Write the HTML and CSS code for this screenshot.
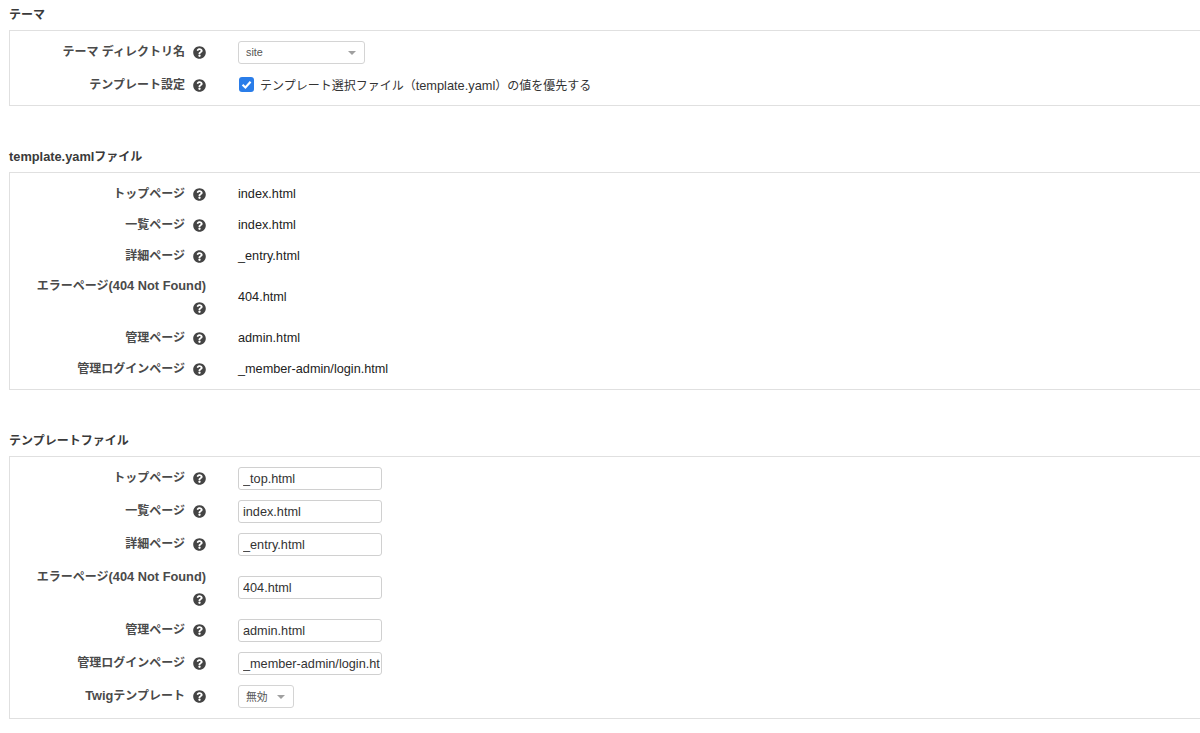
FILE: index.html
```html
<!DOCTYPE html>
<html lang="ja">
<head>
<meta charset="utf-8">
<title>テーマ設定</title>
<link rel="stylesheet" href="styles.css">
</head>
<body>
<svg class="defs" width="0" height="0" aria-hidden="true">
  <symbol id="q" viewBox="0 0 512 512">
    <path d="M504 256c0 137-111 248-248 248S8 393 8 256 119 8 256 8s248 111 248 248zM262.700 90c-54.500 0-89.300 23-116.500 63.800-3.500 5.300-2.400 12.400 2.700 16.300l34.700 26.300c5.200 3.900 12.600 3 16.700-2.100 17.900-22.700 30.100-35.800 57.300-35.800 20.400 0 45.700 13.100 45.700 33 0 15-12.400 22.700-32.600 34-23.600 13.200-54.800 29.700-54.800 70.900V300c0 6.600 5.400 12 12 12h56c6.600 0 12-5.400 12-12v-1.300c0-28.600 83.500-29.800 83.500-107.100C379.400 133.400 319 90 262.700 90zM256 339c-25.500 0-46.200 20.700-46.200 46.200 0 25.500 20.700 46.200 46.200 46.200s46.200-20.700 46.200-46.200c0-25.500-20.700-46.200-46.200-46.200z"/>
  </symbol>
</svg>

<section class="section s-theme">
  <h2 class="heading">テーマ</h2>
  <div class="box box-theme">
    <div class="row r-select">
      <div class="label">テーマ ディレクトリ名<svg class="help"><use href="#q"/></svg></div>
      <div class="value"><span class="select select-wide"><select><option>site</option></select></span></div>
    </div>
    <div class="row r-check">
      <div class="label">テンプレート設定<svg class="help"><use href="#q"/></svg></div>
      <div class="value check-value">
        <span class="check"><svg viewBox="0 0 14 14"><path d="M3.300 7.300 6 9.800 10.800 4.500"/></svg></span>
        <span>テンプレート選択ファイル（<span class="en">template.yaml</span>）の値を優先する</span>
      </div>
    </div>
  </div>
</section>

<section class="section s-yaml">
  <h2 class="heading"><span class="en">template.yaml</span>ファイル</h2>
  <div class="box box-yaml">
    <div class="row r-text"><div class="label">トップページ<svg class="help"><use href="#q"/></svg></div><div class="value">index.html</div></div>
    <div class="row r-text"><div class="label">一覧ページ<svg class="help"><use href="#q"/></svg></div><div class="value">index.html</div></div>
    <div class="row r-text"><div class="label">詳細ページ<svg class="help"><use href="#q"/></svg></div><div class="value">_entry.html</div></div>
    <div class="row r-text r-tall"><div class="label">エラーページ<span class="en">(404 Not Found)</span><svg class="help"><use href="#q"/></svg></div><div class="value">404.html</div></div>
    <div class="row r-text"><div class="label">管理ページ<svg class="help"><use href="#q"/></svg></div><div class="value">admin.html</div></div>
    <div class="row r-text"><div class="label">管理ログインページ<svg class="help"><use href="#q"/></svg></div><div class="value">_member-admin/login.html</div></div>
  </div>
</section>

<section class="section s-files">
  <h2 class="heading">テンプレートファイル</h2>
  <div class="box box-files">
    <div class="row r-input"><div class="label">トップページ<svg class="help"><use href="#q"/></svg></div><div class="value"><input class="input" value="_top.html"></div></div>
    <div class="row r-input"><div class="label">一覧ページ<svg class="help"><use href="#q"/></svg></div><div class="value"><input class="input" value="index.html"></div></div>
    <div class="row r-input"><div class="label">詳細ページ<svg class="help"><use href="#q"/></svg></div><div class="value"><input class="input" value="_entry.html"></div></div>
    <div class="row r-input r-tall-input"><div class="label">エラーページ<span class="en">(404 Not Found)</span><svg class="help"><use href="#q"/></svg></div><div class="value"><input class="input" value="404.html"></div></div>
    <div class="row r-input"><div class="label">管理ページ<svg class="help"><use href="#q"/></svg></div><div class="value"><input class="input" value="admin.html"></div></div>
    <div class="row r-input"><div class="label">管理ログインページ<svg class="help"><use href="#q"/></svg></div><div class="value"><input class="input" value="_member-admin/login.html"></div></div>
    <div class="row r-input"><div class="label"><span class="en">Twig</span>テンプレート<svg class="help"><use href="#q"/></svg></div><div class="value"><span class="select select-small"><select><option>無効</option></select></span></div></div>
  </div>
</section>
</body>
</html>
```

FILE: styles.css
```css
* { box-sizing: border-box; }
html, body { margin: 0; height: 100%; overflow: hidden; background: #fff; }
body {
  width: 1240px;
  padding: 0 0 0 9px;
  font-family: "Liberation Sans", "Noto Sans CJK JP", sans-serif;
  font-size: 12px;
  color: #333;
}
.defs { position: absolute; }
.en { font-size: 12.8px; }
.heading {
  margin: 0;
  height: 16px;
  font-size: 12px;
  line-height: 16px;
  font-weight: 700;
  color: #3a3a3a;
}
.s-theme { padding-top: 7px; }
.s-theme .heading { margin-bottom: 7px; }
.s-yaml { padding-top: 43px; }
.s-yaml .heading { margin-bottom: 7px; }
.s-files { padding-top: 43px; }
.s-files .heading { margin-bottom: 7px; }
.box {
  border: 1px solid #e0e0e0;
  background: #fff;
}
.box-theme { height: 76px; padding-top: 5px; }
.box-yaml { height: 218px; padding-top: 5px; }
.box-files { height: 263px; padding-top: 5px; }
.row { display: flex; align-items: center; }
.r-select { height: 32px; }
.r-check { height: 33px; }
.r-text { height: 31px; }
.r-tall { height: 51px; }
.r-input { height: 33px; }
.r-tall-input { height: 53px; }
.label {
  width: 196px;
  padding-left: 14px;
  flex: none;
  text-align: right;
  font-weight: 700;
  font-size: 12px;
  line-height: 22px;
  color: #4a4a4a;
}
.r-input .label { margin-top: -2px; }
.r-input.r-tall-input .label { margin-top: 0; }
.help {
  display: inline-block;
  width: 13px;
  height: 13px;
  margin-left: 8px;
  vertical-align: -3px;
  fill: #444;
}
.value {
  margin-left: 32px;
  font-size: 12.7px;
  color: #222;
}
.check-value { display: flex; align-items: center; gap: 6px; color: #333; font-size: 12px; }
.check {
  width: 15px;
  height: 15px;
  margin-left: 1px;
  border-radius: 3px;
  background: #2a7de9;
  display: block;
}
.check svg { display: block; width: 15px; height: 15px; fill: none; stroke: #fff; stroke-width: 2; }
.select { position: relative; display: block; }
.select select {
  appearance: none;
  -webkit-appearance: none;
  display: block;
  width: 100%;
  height: 23px;
  padding: 0 0 0 7px;
  border: 1px solid #d4d4d4;
  border-radius: 3px;
  background: #fff;
  font-family: "Liberation Sans", "Noto Sans CJK JP", sans-serif;
  font-size: 10.800px;
  color: #555;
}
.select::after {
  content: "";
  position: absolute;
  right: 9px;
  top: 10px;
  border-style: solid;
  border-width: 4px 4px 0;
  border-color: #a0a0a0 transparent transparent;
}
.select-wide { width: 127px; }
.select-small { width: 56px; }
.input {
  display: block;
  width: 144px;
  height: 23px;
  padding: 0 1px 0 4px;
  border: 1px solid #d0d0d0;
  border-radius: 3px;
  font-family: "Liberation Sans", "Noto Sans CJK JP", sans-serif;
  font-size: 12.7px;
  color: #333;
  background: #fff;
}
```
